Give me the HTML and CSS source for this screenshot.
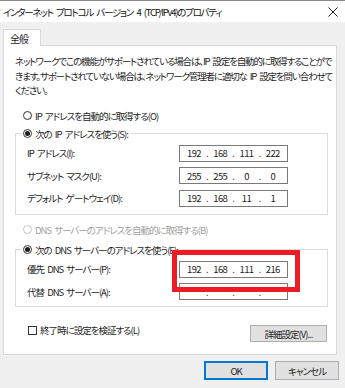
FILE: index.html
```html
<!DOCTYPE html>
<html lang="ja">
<head>
  <meta charset="UTF-8" />
  <title>インターネット プロトコル バージョン 4 (TCP/IPv4)のプロパティ</title>
  <link rel="stylesheet" href="styles.css">
</head>
<body>

  <div class="window">
    <div class="title-bar">
      <span class="title">インターネット プロトコル バージョン 4 (TCP/IPv4)のプロパティ</span>
      <svg class="close" width="10" height="10" viewBox="0 0 10 10">
        <path d="M0.5 0.5 L9.5 9.5 M9.5 0.5 L0.5 9.5" stroke="#222" stroke-width="1" fill="none"/>
      </svg>
    </div>

    <div class="tabs">
      <span class="tab">全般</span>
    </div>

    <div class="panel">
      <p class="intro">
        ネットワークでこの機能がサポートされている場合は、IP 設定を自動的に取得することがで<br>
        きます。サポートされていない場合は、ネットワーク管理者に適切な IP 設定を問い合わせて<br>
        ください。
      </p>

      <div class="option first">
        <span class="radio"></span>
        <span>IP アドレスを自動的に取得する(O)</span>
      </div>

      <fieldset class="group ip-group">
        <legend class="option">
          <span class="radio on"></span>
          <span>次の IP アドレスを使う(S):</span>
        </legend>
        <div class="field-row">
          <span>IP アドレス(I):</span>
          <div class="ip-box"><span>192</span><i>.</i><span>168</span><i>.</i><span>111</span><i>.</i><span>222</span></div>
        </div>
        <div class="field-row">
          <span>サブネット マスク(U):</span>
          <div class="ip-box"><span>255</span><i>.</i><span>255</span><i>.</i><span>0</span><i>.</i><span>0</span></div>
        </div>
        <div class="field-row">
          <span>デフォルト ゲートウェイ(D):</span>
          <div class="ip-box"><span>192</span><i>.</i><span>168</span><i>.</i><span>11</span><i>.</i><span>1</span></div>
        </div>
      </fieldset>

      <div class="option disabled">
        <span class="radio"></span>
        <span>DNS サーバーのアドレスを自動的に取得する(B)</span>
      </div>

      <fieldset class="group dns-group">
        <legend class="option">
          <span class="radio on"></span>
          <span>次の DNS サーバーのアドレスを使う(E):</span>
        </legend>
        <div class="field-row">
          <span>優先 DNS サーバー(P):</span>
          <div class="ip-box"><span>192</span><i>.</i><span>168</span><i>.</i><span>111</span><i>.</i><span>216</span></div>
        </div>
        <div class="field-row">
          <span>代替 DNS サーバー(A):</span>
          <div class="ip-box"><span></span><i>.</i><span></span><i>.</i><span></span><i>.</i><span></span></div>
        </div>
      </fieldset>

      <div class="bottom-row">
        <label class="check">
          <span class="checkbox"></span>
          <span>終了時に設定を検証する(L)</span>
        </label>
        <button class="btn advanced">詳細設定(V)...</button>
      </div>

      <!-- highlight drawn over the screenshot -->
      <div class="highlight"></div>
    </div>

    <div class="footer">
      <button class="btn default">OK</button>
      <button class="btn">キャンセル</button>
    </div>
  </div>

</body>
</html>
```

FILE: styles.css
```css
body {
  margin: 0;
  font-family: "Noto Sans CJK JP", "Noto Sans", sans-serif;
  font-feature-settings: "palt";
  font-size: 9.5px;
  letter-spacing: -1px;
  word-spacing: 2px;
  color: #1e1e1e;
}

.window {
  width: 345px;
  height: 388px;
  background: #f0f0f0;
  border-top: 1px solid #8a8a8a;
  box-sizing: border-box;
  overflow: hidden;
}

.title-bar {
  height: 21px;
  background: white;
  display: flex;
  align-items: center;
  justify-content: space-between;
  padding: 0 7px 0 3px;
}

.title {
  font-size: 9.5px;
  letter-spacing: -1.25px;
  word-spacing: 2.5px;
  color: #111;
}

.close {
  display: block;
}

.tabs {
  display: flex;
  padding: 7px 0 0 3px;
}

.tab {
  position: relative;
  z-index: 1;
  width: 38px;
  height: 17px;
  line-height: 17px;
  padding-left: 6px;
  box-sizing: border-box;
  background: white;
  border: 1px solid #d9d9d9;
  border-bottom: none;
  margin-bottom: -1px;
  font-size: 10px;
}

.panel {
  position: relative;
  margin-left: 3px;
  width: 334px;
  height: 310px;
  box-sizing: border-box;
  background: white;
  border: 1px solid #d9d9d9;
}

.intro {
  margin: 0;
  padding: 8px 0 0 11px;
  line-height: 14.5px;
  letter-spacing: -1.15px;
  white-space: nowrap;
}

.option {
  display: flex;
  align-items: center;
  gap: 3px;
  height: 16px;
  line-height: 16px;
}

.option.first {
  margin: 10px 0 0 19px;
}

.option.disabled {
  margin: 7px 0 0 19px;
  color: #a0a0a0;
}

.radio {
  width: 9px;
  height: 9px;
  border: 1px solid #333;
  border-radius: 50%;
  box-sizing: border-box;
  display: flex;
  align-items: center;
  justify-content: center;
  background: white;
}

.radio.on::after {
  content: "";
  width: 5px;
  height: 5px;
  border-radius: 50%;
  background: #1a1a1a;
}

.option.disabled .radio {
  border-color: #c4c4c4;
}

.group {
  margin: 2px 0 0 11px;
  width: 313px;
  box-sizing: border-box;
  padding: 3px 0 7px 11px;
  border: 1px solid #dcdcdc;
  display: flex;
  flex-direction: column;
  gap: 5.5px;
}

.dns-group {
  margin-top: 4px;
  padding-bottom: 6px;
}

.group legend {
  padding: 0 3px 0 1px;
  margin-left: -5px;
  background: white;
}

.field-row {
  display: grid;
  grid-template-columns: 152px 109px;
  align-items: center;
  height: 17px;
}

.ip-box {
  height: 17px;
  box-sizing: border-box;
  border: 1px solid #7a7a7a;
  display: flex;
  align-items: center;
  padding-left: 4px;
  color: #222;
  letter-spacing: -0.6px;
}

.ip-box span {
  width: 20px;
  text-align: center;
}

.ip-box i {
  font-style: normal;
  width: 6.25px;
  text-align: center;
}

.bottom-row {
  display: flex;
  justify-content: space-between;
  align-items: flex-start;
  margin: 18px 9px 0 24px;
}

.check {
  display: flex;
  align-items: center;
  gap: 3px;
  height: 10px;
  line-height: 10px;
}

.checkbox {
  width: 9px;
  height: 9px;
  border: 1px solid #333;
  box-sizing: border-box;
}

.btn {
  font-family: inherit;
  font-size: 9.5px;
  font-feature-settings: "palt";
  letter-spacing: -1px;
  color: #1e1e1e;
  background: #e1e1e1;
  border: 1px solid #adadad;
  padding: 0;
  margin: 0;
}

.advanced {
  width: 77px;
  height: 17px;
}

.highlight {
  position: absolute;
  left: 168px;
  top: 204px;
  width: 128px;
  height: 42px;
  box-sizing: border-box;
  border: 5px solid #ed1c24;
}

.footer {
  display: flex;
  justify-content: flex-end;
  gap: 7px;
  padding: 6px 6px 0 0;
}

.footer .btn {
  width: 64px;
  height: 19px;
}

.btn.default {
  border: 2px solid #0078d7;
}
```
